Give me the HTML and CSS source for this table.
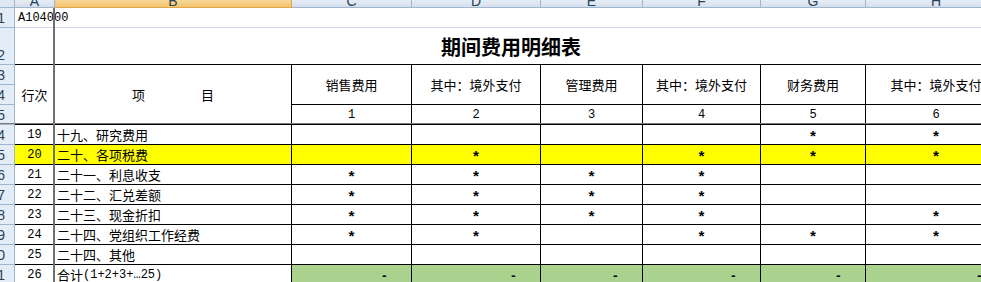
FILE: index.html
```html
<!DOCTYPE html>
<html lang="zh-CN">
<head>
<meta charset="utf-8">
<title>期间费用明细表</title>
<link rel="stylesheet" href="styles.css">
</head>
<body>
<div class="sheet">
  <!-- column headers -->
  <div class="ch corner"></div>
  <div class="ch"><span>A</span></div>
  <div class="ch sel"><span>B</span></div>
  <div class="ch"><span>C</span></div>
  <div class="ch"><span>D</span></div>
  <div class="ch"><span>E</span></div>
  <div class="ch"><span>F</span></div>
  <div class="ch"><span>G</span></div>
  <div class="ch"><span>H</span></div>

  <!-- row 1 -->
  <div class="rh">1</div>
  <div class="code">A104000</div>

  <!-- row 2 -->
  <div class="rh rh-tall">2</div>
  <div class="title">期间费用明细表</div>

  <!-- rows 3-5 header -->
  <div class="rh">3</div>
  <div class="c hd col-a span3">行次</div>
  <div class="c hd col-b span3"><span>项</span><span>目</span></div>
  <div class="c hd span2">销售费用</div>
  <div class="c hd span2">其中：境外支付</div>
  <div class="c hd span2">管理费用</div>
  <div class="c hd span2">其中：境外支付</div>
  <div class="c hd span2">财务费用</div>
  <div class="c hd span2">其中：境外支付</div>
  <div class="rh">4</div>
  <div class="rh">5</div>
  <div class="c num">1</div>
  <div class="c num">2</div>
  <div class="c num">3</div>
  <div class="c num">4</div>
  <div class="c num">5</div>
  <div class="c num">6</div>

  <!-- data rows -->
  <div class="rh">14</div>
  <div class="c num">19</div>
  <div class="c item">十九、研究费用</div>
  <div class="c"></div>
  <div class="c"></div>
  <div class="c"></div>
  <div class="c"></div>
  <div class="c ast">*</div>
  <div class="c ast">*</div>

  <div class="rh">15</div>
  <div class="c num hl">20</div>
  <div class="c item hl">二十、各项税费</div>
  <div class="c hl"></div>
  <div class="c ast hl">*</div>
  <div class="c hl"></div>
  <div class="c ast hl">*</div>
  <div class="c ast hl">*</div>
  <div class="c ast hl">*</div>

  <div class="rh">16</div>
  <div class="c num">21</div>
  <div class="c item">二十一、利息收支</div>
  <div class="c ast">*</div>
  <div class="c ast">*</div>
  <div class="c ast">*</div>
  <div class="c ast">*</div>
  <div class="c"></div>
  <div class="c"></div>

  <div class="rh">17</div>
  <div class="c num">22</div>
  <div class="c item">二十二、汇兑差额</div>
  <div class="c ast">*</div>
  <div class="c ast">*</div>
  <div class="c ast">*</div>
  <div class="c ast">*</div>
  <div class="c"></div>
  <div class="c"></div>

  <div class="rh">18</div>
  <div class="c num">23</div>
  <div class="c item">二十三、现金折扣</div>
  <div class="c ast">*</div>
  <div class="c ast">*</div>
  <div class="c ast">*</div>
  <div class="c ast">*</div>
  <div class="c"></div>
  <div class="c ast">*</div>

  <div class="rh">19</div>
  <div class="c num">24</div>
  <div class="c item">二十四、党组织工作经费</div>
  <div class="c ast">*</div>
  <div class="c ast">*</div>
  <div class="c"></div>
  <div class="c ast">*</div>
  <div class="c ast">*</div>
  <div class="c ast">*</div>

  <div class="rh">20</div>
  <div class="c num">25</div>
  <div class="c item">二十四、其他</div>
  <div class="c"></div>
  <div class="c"></div>
  <div class="c"></div>
  <div class="c"></div>
  <div class="c"></div>
  <div class="c"></div>

  <div class="rh">21</div>
  <div class="c num">26</div>
  <div class="c item">合计<span class="lat">(1+2+3+…25)</span></div>
  <div class="c tot">-</div>
  <div class="c tot">-</div>
  <div class="c tot">-</div>
  <div class="c tot">-</div>
  <div class="c tot">-</div>
  <div class="c tot">-</div>

  <div class="freeze-v"></div>
  <div class="freeze-h"></div>
</div>
</body>
</html>
```

FILE: styles.css
```css
html, body {
  margin: 0;
  padding: 0;
  background: #ffffff;
  overflow: hidden;
}

.sheet {
  position: relative;
  display: grid;
  grid-template-columns: 15px 40px 237px 120px 129px 102px 118px 105px 141px;
  grid-template-rows: 8px 20px 37px 20px 20px 20px repeat(8, 20px);
  width: 1007px;
  font-family: "Noto Sans CJK SC", sans-serif;
  font-size: 13px;
  color: #000;
}

.sheet > div {
  box-sizing: border-box;
  min-width: 0;
  overflow: hidden;
  white-space: nowrap;
}

/* column header strip */
.ch {
  background: linear-gradient(#e6edf7, #d5dfec);
  border-right: 1px solid #9eb6ce;
  border-bottom: 1px solid #9eb6ce;
  display: flex;
  justify-content: center;
  align-items: flex-end;
  font-family: "Liberation Sans", sans-serif;
  font-size: 14px;
  line-height: 12px;
  color: #2a4257;
}
.ch.corner {
  background: #dfe7f2;
}
.ch.sel {
  background: linear-gradient(#f9d99a, #f2c46b);
  border-right-color: #e2a64c;
  border-bottom-color: #e2a64c;
}

/* row headers */
.rh {
  grid-column: 1;
  background: #e4ecf7;
  border-right: 1px solid #9eb6ce;
  border-bottom: 1px solid #9eb6ce;
  display: flex;
  justify-content: flex-end;
  align-items: center;
  padding-right: 9px;
  font-family: "Liberation Sans", sans-serif;
  font-size: 14px;
  color: #2a4257;
}
.rh-tall {
  align-items: flex-end;
  padding-bottom: 1px;
}

/* row 1 */
.code {
  grid-column: 2 / 10;
  border-bottom: 1px solid #d0d7e5;
  display: flex;
  align-items: center;
  padding-left: 3px;
  font-family: "Liberation Mono", monospace;
  font-size: 12px;
}

/* row 2 title */
.title {
  grid-column: 2 / 10;
  border-bottom: 1px solid #000;
  display: flex;
  align-items: center;
  justify-content: center;
  font-size: 20px;
  font-weight: bold;
}

/* table cells */
.c {
  border-right: 1px solid #000;
  border-bottom: 1px solid #000;
  display: flex;
  align-items: center;
  justify-content: center;
}
.hd {
  font-size: 13px;
}
.col-a {
  grid-column: 2;
}
.col-b {
  grid-column: 3;
  gap: 56px;
}
.span3 {
  grid-row: span 3;
}
.span2 {
  grid-row: span 2;
}

.num {
  font-family: "Liberation Mono", monospace;
  font-size: 12px;
}
.item {
  justify-content: flex-start;
  padding-left: 2px;
}
.lat {
  font-family: "Liberation Mono", monospace;
  font-size: 12px;
}
.ast {
  font-family: "Liberation Mono", monospace;
  font-size: 15px;
  font-weight: bold;
  padding-top: 7px;
}
.hl {
  background: #ffff00;
}
.tot {
  background: #abd18f;
  justify-content: flex-end;
  padding-right: 23px;
  padding-top: 4px;
  font-family: "Liberation Mono", monospace;
  font-size: 12px;
  font-weight: bold;
}

/* frozen pane dividers overlaying the grid */
.freeze-v {
  position: absolute;
  left: 53px;
  top: 8px;
  bottom: 0;
  width: 2px;
  background: #6f6f6f;
}
.freeze-h {
  position: absolute;
  left: 0;
  right: 0;
  top: 123px;
  height: 1px;
  background: #7a7a7a;
}
```
